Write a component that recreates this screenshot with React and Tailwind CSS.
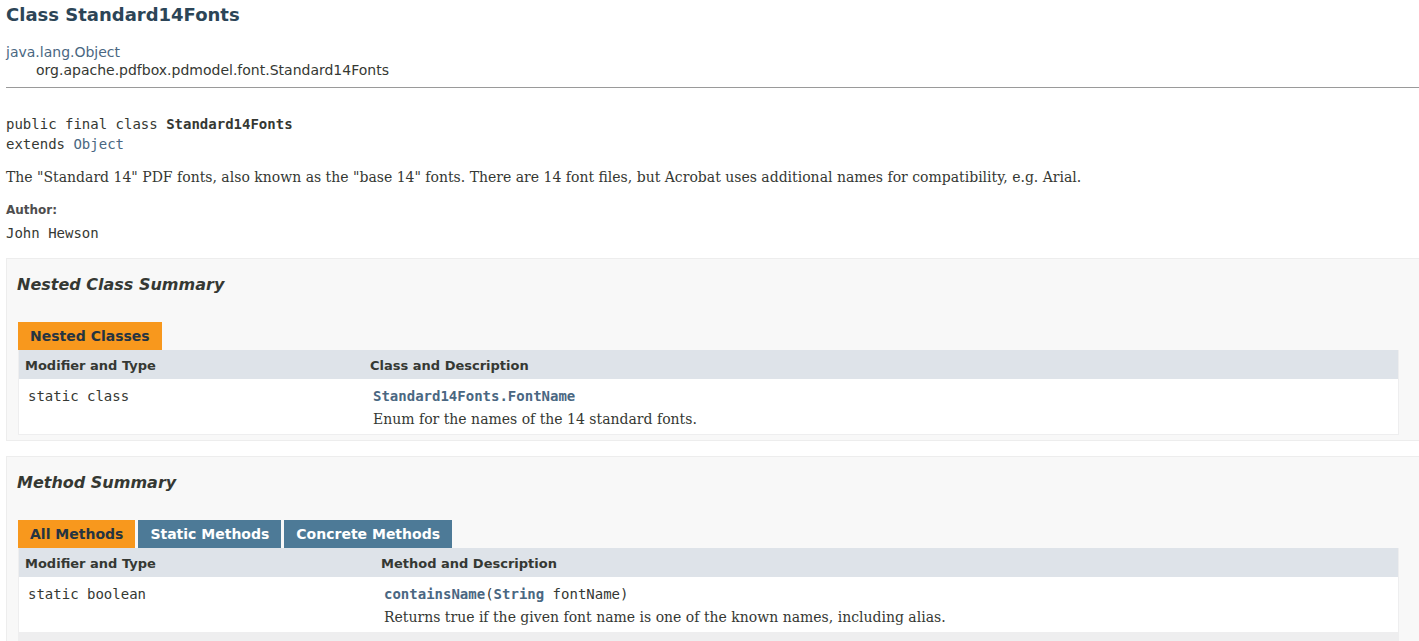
import React from 'react';

const sans = "font-['DejaVu_Sans',sans-serif]";
const serif = "font-['DejaVu_Serif',serif]";
const mono = "font-['DejaVu_Sans_Mono',monospace]";

const Tab = ({ label, active }) => (
  <div
    className={`h-[28px] flex items-center px-[12px] text-[14px] font-bold ${sans} ${
      active ? 'bg-[#f8981d] text-[#253441]' : 'bg-[#4d7a97] text-white'
    }`}
  >
    {label}
  </div>
);

const SummaryBlock = ({ title, tabs, colWidth, secondHeader, name, args, desc, moreRows }) => (
  <div className="-mr-[2px] border border-[#ededed] bg-[#f8f8f8] pl-[11px] pr-[21px] pt-[16px] pb-[5px]">
    <h3 className={`-ml-[1px] h-[20px] leading-[20px] text-[16px] font-bold italic text-[#353833] ${sans}`}>{title}</h3>
    <div className="mt-[27px] flex gap-[3px]">
      {tabs.map((t, i) => (
        <Tab key={t} label={t} active={i === 0} />
      ))}
    </div>
    <div className="border-x border-b border-[#eeeeef]">
      <div className={`h-[29px] flex items-center pt-[3px] bg-[#dee3e9] text-[13px] font-bold text-[#353833] ${sans}`}>
        <div className="pl-[6px] shrink-0" style={{ width: colWidth }}>Modifier and Type</div>
        <div className="pl-[6px]">{secondHeader}</div>
      </div>
      <div className="h-[55px] flex bg-white">
        <div className={`pl-[9px] pt-[6px] leading-[23px] text-[14px] text-[#353833] shrink-0 ${mono}`} style={{ width: colWidth }}>
          {name[0]}
        </div>
        <div className="pl-[9px] pt-[6px] leading-[23px]">
          <div className={`text-[14px] text-[#353833] ${mono}`}>
            <span className="font-bold text-[#4a6782]">{name[1]}</span>
            {args}
          </div>
          <div className={`text-[14px] text-[#353833] ${serif}`}>{desc}</div>
        </div>
      </div>
      {moreRows && <div className="h-[20px] bg-[#eeeeef]" />}
    </div>
  </div>
);

export default function App() {
  return (
    <div className="w-full h-[641px] overflow-hidden bg-white text-[#353833]">
      <div className="pl-[6px]">
        <h2 className={`h-[28px] flex items-center text-[18px] font-bold text-[#2c4557] ${sans}`}>
          Class Standard14Fonts
        </h2>
        <div className={`mt-[15px] text-[14px] leading-[18px] ${sans}`}>
          <div className="text-[#4a6782]">java.lang.Object</div>
          <div className="pl-[30px] text-[#353833]">org.apache.pdfbox.pdmodel.font.Standard14Fonts</div>
        </div>
        <hr className="mt-[8px] border-t border-[#9a9a9a]" />
        <div className={`mt-[26px] text-[14px] leading-[20px] ${mono}`}>
          <div>
            public final class <span className="font-bold">Standard14Fonts</span>
          </div>
          <div>
            extends <span className="text-[#4a6782]">Object</span>
          </div>
        </div>
        <p className={`mt-[13px] text-[14px] leading-[20px] ${serif}`}>
          The "Standard 14" PDF fonts, also known as the "base 14" fonts. There are 14 font files, but Acrobat uses additional names for compatibility, e.g. Arial.
        </p>
        <div className={`mt-[15px] h-[16px] leading-[16px] text-[12px] font-bold text-[#4e4e4e] ${sans}`}>Author:</div>
        <div className={`mt-[5px] text-[14px] leading-[20px] ${mono}`}>John Hewson</div>

        <div className="mt-[15px]">
          <SummaryBlock
            title="Nested Class Summary"
            tabs={['Nested Classes']}
            colWidth={345}
            secondHeader="Class and Description"
            name={['static class', 'Standard14Fonts.FontName']}
            args=""
            desc="Enum for the names of the 14 standard fonts."
          />
        </div>
        <div className="mt-[15px]">
          <SummaryBlock
            title="Method Summary"
            tabs={['All Methods', 'Static Methods', 'Concrete Methods']}
            colWidth={356}
            secondHeader="Method and Description"
            name={['static boolean', 'containsName']}
            args={
              <>
                (<span className="font-bold text-[#4a6782]">String</span> fontName)
              </>
            }
            desc="Returns true if the given font name is one of the known names, including alias."
            moreRows
          />
        </div>
      </div>
    </div>
  );
}
